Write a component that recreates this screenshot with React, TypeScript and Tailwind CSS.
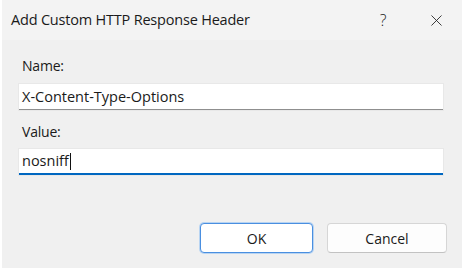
import { X } from "lucide-react"

export default function App() {
  return (
    <div
      className="w-[462px] h-[270px] bg-white pl-[2px] pb-[2px] overflow-hidden"
      style={{ fontFamily: '"Open Sans", "Noto Sans", sans-serif' }}
    >
      <div className="h-full flex flex-col bg-[#f0f0f0]">
        {/* title bar */}
        <div className="h-[40px] bg-[#f3f3f3] flex items-center text-[#1a1a1a]">
          <div className="pl-[9px] text-[14.5px] tracking-[-0.2px] flex-1">Add Custom HTTP Response Header</div>
          <div className="w-[20px] text-[16px] text-center mr-[33px] font-light">?</div>
          <div className="w-[20px] mr-[16px] flex justify-center">
            <X size={19} strokeWidth={1.1} className="text-[#222]" />
          </div>
        </div>

        {/* form */}
        <div className="flex flex-col pl-[17px] pr-[19px] pt-[16px] text-[14px] text-[#1a1a1a]">
          <label className="pl-[3px] leading-[20px] tracking-[-0.2px]">Name:</label>
          <div className="mt-[8px] h-[26px] bg-white border-b border-[#8f8f8f] shadow-[0_0_0_1px_#e8e8e8] flex items-center pl-[3px] text-[14.5px]">
            X-Content-Type-Options
          </div>
          <label className="mt-[12px] pl-[3px] leading-[20px] tracking-[-0.2px]">Value:</label>
          <div className="mt-[7px] h-[26px] bg-white border-b-2 border-[#0067c0] shadow-[0_0_0_1px_#e8e8e8] flex items-center pl-[3px] text-[14.5px]">
            <span>nosniff</span>
            <span className="w-px h-[17px] bg-[#111] ml-[1px]" />
          </div>
        </div>

        {/* buttons */}
        <div className="mt-auto mb-[15px] flex justify-end gap-[14px] pr-[15px] text-[14px] text-[#1a1a1a]">
          <button className="w-[113px] h-[30px] rounded-[4px] bg-white border border-[#4a8fe0] shadow-[0_0_0_1px_#b8d4f2]">
            OK
          </button>
          <button className="w-[120px] h-[30px] rounded-[4px] bg-[#fdfdfd] border border-[#d6d6d6] border-b-[#c2c2c2]">
            Cancel
          </button>
        </div>
      </div>
    </div>
  )
}
